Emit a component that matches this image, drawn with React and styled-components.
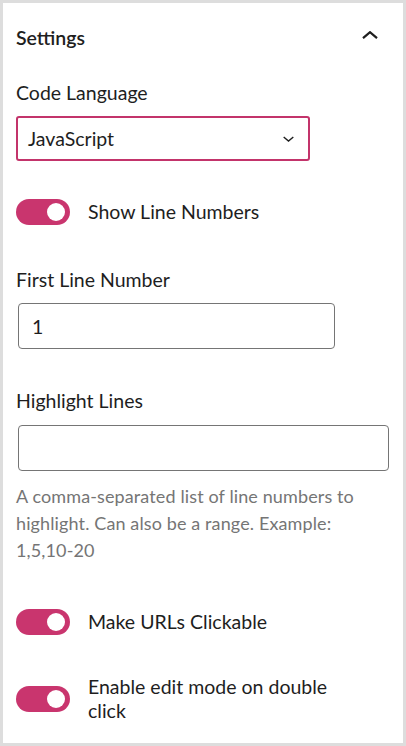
import styled, { createGlobalStyle } from "styled-components";
import { useState } from "react";

//global page reset
const GlobalStyle = createGlobalStyle`
  * { box-sizing: border-box; }
  html, body { margin: 0; padding: 0; background: #dddddd; }
  body {
    font-family: Lato, "Noto Sans", sans-serif;
    color: #1e1e1e;
  }
`;

//styles
const Frame = styled.div`
  width: 406px;
  height: 746px;
  padding: 3px;
  background: #dddddd;
`;

const Panel = styled.section`
  width: 100%;
  height: 100%;
  background: #ffffff;
  overflow: hidden;
`;

const PanelHeader = styled.header`
  height: 70px;
  padding: 0 16px 0 13px;
  display: flex;
  align-items: center;
  justify-content: space-between;
`;

const PanelTitle = styled.h2`
  margin: 0;
  font-size: 19.5px;
  font-weight: 600;
  line-height: 1;
`;

const CollapseButton = styled.button`
  background: transparent;
  border: none;
  padding: 0;
  width: 24px;
  height: 24px;
  margin-right: 5px;
  margin-top: -6px;
  display: flex;
  align-items: center;
  justify-content: center;
`;

const PanelBody = styled.div`
  padding: 0 13px;
`;

const FieldLabel = styled.label`
  display: block;
  font-size: 19.5px;
  line-height: 27px;
  margin-top: ${({ $top }) => $top || 0}px;
`;

const SelectBox = styled.div`
  margin-top: 10px;
  width: 294px;
  height: 45px;
  border: 2px solid #c3346b;
  border-radius: 3px;
  display: flex;
  align-items: center;
  padding: 0 14px 0 10px;
  justify-content: space-between;
  font-size: 19.5px;
`;

const TextInput = styled.input`
  display: block;
  margin: ${({ $top }) => $top || 0}px 0 0 2px;
  width: ${({ $width }) => $width}px;
  height: 46px;
  border: 1px solid #757575;
  border-radius: 4px;
  padding: 0 13px;
  font-family: inherit;
  font-size: 19.5px;
  color: #1e1e1e;
  outline: none;
`;

const HelpText = styled.p`
  margin: 12px 0 0;
  max-width: 360px;
  font-size: 18px;
  line-height: 27px;
  letter-spacing: 0.12px;
  color: #757575;
`;

const ToggleRow = styled.div`
  display: flex;
  align-items: center;
  gap: 18px;
  margin-top: ${({ $top }) => $top || 0}px;
`;

const Track = styled.button`
  flex: none;
  position: relative;
  width: 54px;
  height: 26px;
  padding: 0;
  border: none;
  border-radius: 13px;
  background: ${({ $on }) => ($on ? "#c9356e" : "#ffffff")};
  box-shadow: ${({ $on }) => ($on ? "none" : "inset 0 0 0 1px #1e1e1e")};
  cursor: pointer;
`;

const Knob = styled.span`
  position: absolute;
  top: 4px;
  left: ${({ $on }) => ($on ? "31px" : "5px")};
  width: 18px;
  height: 18px;
  border-radius: 50%;
  background: ${({ $on }) => ($on ? "#ffffff" : "#1e1e1e")};
`;

const ToggleLabel = styled.span`
  font-size: 19.5px;
  line-height: 24px;
  max-width: ${({ $max }) => ($max ? `${$max}px` : "none")};
`;

const Chevron = ({ up, size, stroke }) => (
  <svg width={size[0]} height={size[1]} viewBox="0 0 16 8" fill="none">
    <path
      d={up ? "M1 7.2 8 1.2l7 6" : "M1 1l7 6 7-6"}
      stroke="#1e1e1e"
      strokeWidth={stroke}
    />
  </svg>
);

const Toggle = ({ on, onChange, children, top, max }) => (
  <ToggleRow $top={top}>
    <Track $on={on} onClick={onChange} aria-pressed={on}>
      <Knob $on={on} />
    </Track>
    <ToggleLabel $max={max}>{children}</ToggleLabel>
  </ToggleRow>
);

//component
export default function App() {
  const [flags, setFlags] = useState({ lines: true, urls: true, edit: true });
  const flip = (k) => setFlags((f) => ({ ...f, [k]: !f[k] }));

  return (
    <Frame>
      <GlobalStyle />
      <Panel>
        <PanelHeader>
          <PanelTitle>Settings</PanelTitle>
          <CollapseButton aria-label="collapse">
            <Chevron up size={[16, 8]} stroke={2.2} />
          </CollapseButton>
        </PanelHeader>
        <PanelBody>
          <FieldLabel $top={6}>Code Language</FieldLabel>
          <SelectBox>
            <span>JavaScript</span>
            <Chevron size={[11, 6]} stroke={2} />
          </SelectBox>

          <Toggle top={38} on={flags.lines} onChange={() => flip("lines")}>
            Show Line Numbers
          </Toggle>

          <FieldLabel $top={41}>First Line Number</FieldLabel>
          <TextInput $top={10} $width={317} defaultValue="1" />

          <FieldLabel $top={38}>Highlight Lines</FieldLabel>
          <TextInput $top={11} $width={371} />
          <HelpText>
            A comma-separated list of line numbers to highlight. Can also be a
            range. Example: 1,5,10-20
          </HelpText>

          <Toggle top={45} on={flags.urls} onChange={() => flip("urls")}>
            Make URLs Clickable
          </Toggle>
          <Toggle
            top={40}
            max={262}
            on={flags.edit}
            onChange={() => flip("edit")}
          >
            Enable edit mode on double click
          </Toggle>
        </PanelBody>
      </Panel>
    </Frame>
  );
}
